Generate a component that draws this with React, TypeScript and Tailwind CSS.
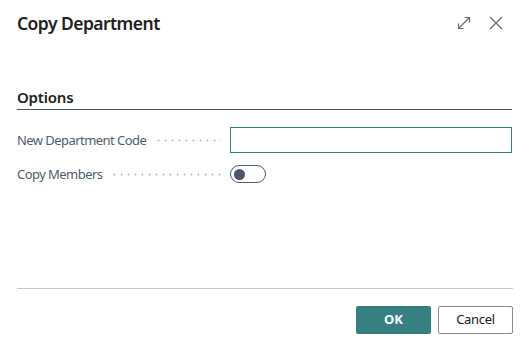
import React from 'react'

const font = { fontFamily: '"Noto Sans", "Open Sans", Arial, sans-serif' }

const Leader: React.FC = () => (
  <span className="flex-1 h-[3px] ml-[9px] mr-[9px] bg-[radial-gradient(circle,#c4c4c4_0.9px,transparent_1.2px)] bg-[length:7px_3px]" />
)

const App: React.FC = () => {
  return (
    <div
      className="w-[529px] h-[349px] bg-white flex flex-col px-[17px] text-[#212121]"
      style={font}
    >
      <div className="h-[46px] flex items-center justify-between">
        <h1 className="text-[17.5px] font-semibold leading-[24px] tracking-[-0.55px]">Copy Department</h1>
        <div className="flex items-center gap-[18px] mr-[9px]">
          <svg width="14" height="14" viewBox="0 0 14 14" fill="none" stroke="#6b6b6b" strokeWidth="1.2">
            <path d="M1.5 12.5 L12.5 1.5" />
            <path d="M7.5 1.5 H12.5 V6.5" />
            <path d="M1.5 7.5 V12.5 H6.5" />
          </svg>
          <svg width="14" height="14" viewBox="0 0 14 14" fill="none" stroke="#6b6b6b" strokeWidth="1.3">
            <path d="M1 1 L13 13" />
            <path d="M13 1 L1 13" />
          </svg>
        </div>
      </div>

      <div className="mt-[41px] h-[23px] border-b border-[#4b5563]">
        <h2 className="text-[15px] font-semibold leading-[20px] tracking-[-0.2px]">Options</h2>
      </div>

      <div className="mt-[17px] flex flex-col gap-[12px]">
        <div className="flex items-center">
          <div className="w-[213px] flex items-center">
            <span className="text-[13px] text-[#505c6d] leading-[18px] tracking-[-0.55px]">New Department Code</span>
            <Leader />
          </div>
          <input className="flex-1 h-[26px] border border-[#2e8383] outline-none px-2 text-[13px]" />
        </div>
        <div className="flex items-center">
          <div className="w-[213px] flex items-center">
            <span className="text-[13px] text-[#505c6d] leading-[18px] tracking-[-0.55px]">Copy Members</span>
            <Leader />
          </div>
          <div className="w-[36px] h-[18px] rounded-full border border-[#505c6d] flex items-center pl-[3px]">
            <span className="w-[11px] h-[11px] rounded-full bg-[#4c566a]" />
          </div>
        </div>
      </div>

      <div className="flex-1" />

      <div className="border-t border-[#c8c8c8] h-[61px] flex items-start justify-end pt-[17px] gap-[7px] -mr-[1px]">
        <button className="w-[75px] h-[28px] rounded-[2px] bg-[#368082] text-white text-[13px] font-bold">
          OK
        </button>
        <button className="w-[75px] h-[28px] rounded-[2px] border border-[#8a8a8a] bg-white text-[#212121] text-[13px] tracking-[-0.3px]">
          Cancel
        </button>
      </div>
    </div>
  )
}

export default App
